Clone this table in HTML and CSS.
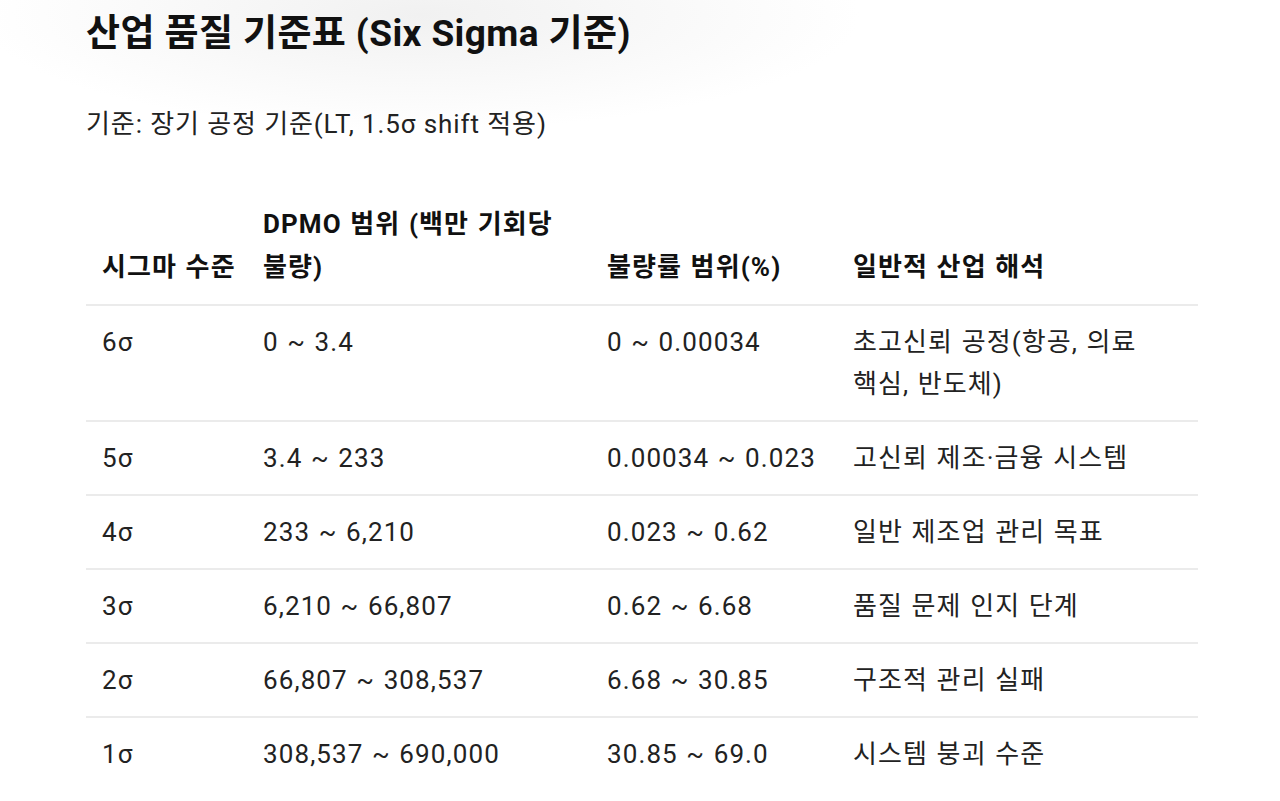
FILE: index.html
```html
<!DOCTYPE html>
<html lang="ko">
<head>
<meta charset="utf-8">
<title>산업 품질 기준표</title>
<link rel="stylesheet" href="styles.css">
</head>
<body>
<main class="page">
  <h1 class="title">산업 품질 기준표 (Six Sigma 기준)</h1>
  <p class="note">기준: 장기 공정 기준(LT, 1.5σ shift 적용)</p>
  <table class="grid">
    <colgroup>
      <col class="c1"><col class="c2"><col class="c3"><col class="c4">
    </colgroup>
    <thead>
      <tr>
        <th class="nowrap">시그마 수준</th>
        <th>DPMO 범위 (백만 기회당 불량)</th>
        <th>불량률 범위(%)</th>
        <th>일반적 산업 해석</th>
      </tr>
    </thead>
    <tbody>
      <tr><td>6σ</td><td>0 ~ 3.4</td><td>0 ~ 0.00034</td><td>초고신뢰 공정(항공, 의료 핵심, 반도체)</td></tr>
      <tr><td>5σ</td><td>3.4 ~ 233</td><td class="nowrap">0.00034 ~ 0.023</td><td>고신뢰 제조·금융 시스템</td></tr>
      <tr><td>4σ</td><td>233 ~ 6,210</td><td>0.023 ~ 0.62</td><td>일반 제조업 관리 목표</td></tr>
      <tr><td>3σ</td><td>6,210 ~ 66,807</td><td>0.62 ~ 6.68</td><td>품질 문제 인지 단계</td></tr>
      <tr><td>2σ</td><td>66,807 ~ 308,537</td><td>6.68 ~ 30.85</td><td>구조적 관리 실패</td></tr>
      <tr><td>1σ</td><td>308,537 ~ 690,000</td><td>30.85 ~ 69.0</td><td>시스템 붕괴 수준</td></tr>
    </tbody>
  </table>
</main>
</body>
</html>
```

FILE: styles.css
```css
html, body {
  margin: 0;
  padding: 0;
}

body {
  background:
    radial-gradient(ellipse 440px 115px at 420px 15px, #f1f1f1 0%, rgba(255,255,255,0) 100%),
    #ffffff;
  color: #1c1c1c;
  font-family: Roboto, "Noto Sans CJK KR", sans-serif;
  min-height: 801px;
  word-break: keep-all;
}

.page {
  padding: 12px 0 0 86px;
  width: 1112px;
}

.title {
  margin: 0;
  font-size: 37px;
  line-height: 44px;
  font-weight: 700;
  color: #111;
  letter-spacing: 0.4px;
}

.note {
  margin: 50px 0 0;
  font-size: 26px;
  line-height: 36px;
  letter-spacing: 0.9px;
  color: #222;
}

.grid {
  margin-top: 46px;
  width: 1112px;
  border-collapse: collapse;
  table-layout: fixed;
  font-size: 26px;
  line-height: 42px;
  letter-spacing: 1.1px;
  word-spacing: 1px;
}

.c1 { width: 161px; }
.c2 { width: 344px; }
.c3 { width: 246px; }
.c4 { width: 361px; }

.grid th,
.grid td {
  padding: 15px 16px;
  text-align: left;
  vertical-align: top;
  border-bottom: 2px solid #ebebeb;
}

.grid th {
  font-weight: 700;
  vertical-align: bottom;
  line-height: 43px;
  color: #111;
}

.grid td {
  font-weight: 400;
  color: #222;
}

.grid .nowrap {
  white-space: nowrap;
}

.grid tbody tr:last-child td {
  border-bottom: none;
}
```
